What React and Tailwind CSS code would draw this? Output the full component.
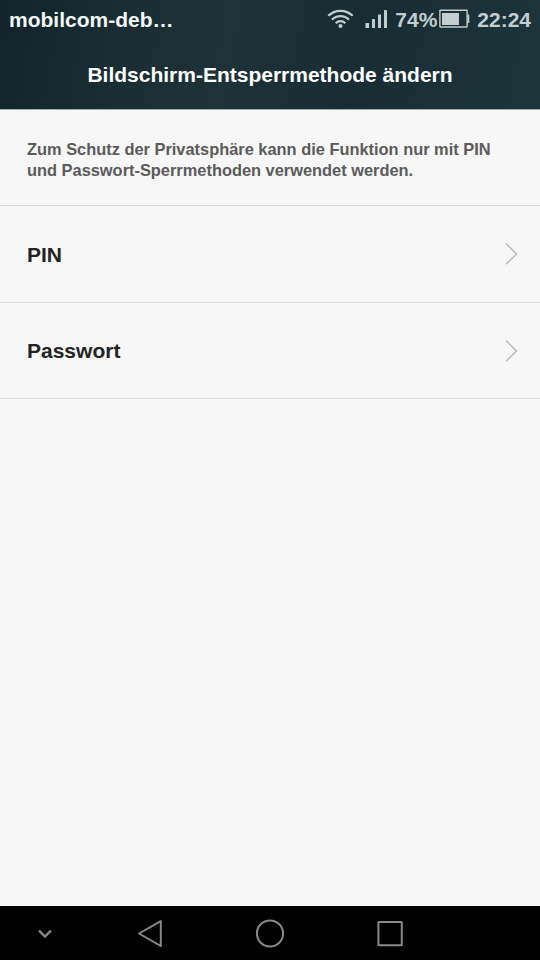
import React from 'react';

const methods = [
  { id: 'pin', label: 'PIN', height: 'h-[97px]' },
  { id: 'password', label: 'Passwort', height: 'h-24' },
];

const WifiIcon = () => (
  <svg className="w-[27px] h-5" viewBox="0 0 27 20" fill="none" stroke="#c3cdcf" strokeWidth="2.2">
    <path d="M1.3 6.8C8 .1 19 .1 25.7 6.8" />
    <path d="M5 10.6C9.7 5.9 17.3 5.9 22 10.6" />
    <path d="M8.7 14.2C11.4 11.5 15.6 11.5 18.3 14.2" />
    <circle cx="13.5" cy="17" r="2" fill="#c3cdcf" stroke="none" />
  </svg>
);

const SignalIcon = () => (
  <svg className="w-[23px] h-5" viewBox="0 0 23 20" fill="#c3cdcf">
    <rect x="0.5" y="14" width="3.6" height="5" rx="0.5" />
    <rect x="7" y="10" width="3" height="9" rx="0.5" />
    <rect x="13" y="5.5" width="3" height="13.5" rx="0.5" />
    <rect x="19" y="1" width="3" height="18" rx="0.5" />
  </svg>
);

const BatteryIcon = () => (
  <svg className="w-[31px] h-5" viewBox="0 0 31 20">
    <rect x="0.9" y="1.2" width="27.2" height="16.8" rx="0.5" fill="none" stroke="#c3cdcf" strokeWidth="1.4" />
    <rect x="3" y="4" width="17" height="12" fill="#c3cdcf" />
    <path d="M28.5 5.5h1.8v8.5h-1.8z" fill="#c3cdcf" />
  </svg>
);

const StatusBar = () => (
  <div className="flex items-center h-[38px] pl-[9px] pr-[9px] leading-6">
    <span className="flex-1 pt-px text-[#f3f9fa]">mobilcom-deb…</span>
    <div className="flex items-center text-[#c3cdcf]">
      <WifiIcon />
      <span className="w-[11px]" />
      <SignalIcon />
      <span className="ml-[7px] w-[44px] pt-px">74%</span>
      <BatteryIcon />
      <span className="ml-[7px] pt-px">22:24</span>
    </div>
  </div>
);

const MethodRow = ({ label, height }) => (
  <button className={`${height} w-full flex items-center justify-between pl-[27px] pr-[22px] border-b border-[#dcdedd] text-left`}>
    <span className="pt-px text-[21px] leading-6 text-[#242424]">{label}</span>
    <svg className="w-[14px] h-6" viewBox="0 0 14 24" fill="none" stroke="#b9b9b9" strokeWidth="1.4">
      <path d="M2 1.5L12.5 12L2 22.2" />
    </svg>
  </button>
);

const NavBar = () => (
  <nav className="h-[54px] bg-black">
    <svg className="block w-[540px] h-[54px]" viewBox="0 0 540 54" fill="none" stroke="#898989" strokeWidth="2">
      <path d="M39 24.5L45 30.5L51 24.5" strokeWidth="2.4" />
      <path d="M160.8 15.2L139 27.5L160.8 40Z" strokeLinejoin="round" />
      <circle cx="270" cy="27.5" r="13.1" />
      <rect x="378.4" y="16" width="23.4" height="23.2" rx="0.5" />
    </svg>
  </nav>
);

export default function App() {
  return (
    <div
      className="w-[540px] h-[960px] flex flex-col bg-[#f7f7f7] font-bold overflow-hidden"
      style={{ fontFamily: '"Liberation Sans", Arial, sans-serif' }}
    >
      <header className="h-[109px] shrink-0 text-[21px] bg-[linear-gradient(100deg,#13252b_0%,#1e3338_42%,#182d33_65%,#1b353b_100%)]">
        <StatusBar />
        <h1 className="mt-[25px] text-center leading-6 text-white">Bildschirm-Entsperrmethode ändern</h1>
      </header>

      <main className="flex-1">
        <div className="h-[97px] pt-[29px] pl-[27px] border-t border-t-[#a5abac] border-b border-b-[#d5d8d7]">
          <p className="text-[16.4px] leading-[21px] text-[#5b5b5b]">
            Zum Schutz der Privatsphäre kann die Funktion nur mit PIN
            <br />
            und Passwort-Sperrmethoden verwendet werden.
          </p>
        </div>
        {methods.map((method) => (
          <MethodRow key={method.id} label={method.label} height={method.height} />
        ))}
      </main>

      <NavBar />
    </div>
  );
}
